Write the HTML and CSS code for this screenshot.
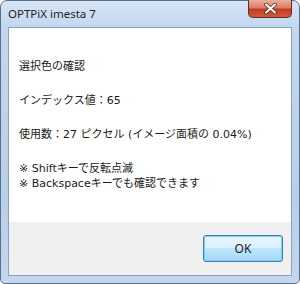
FILE: index.html
```html
<!DOCTYPE html>
<html lang="ja">
<head>
    <meta charset="UTF-8">
    <title>OPTPiX imesta 7</title>
    <link rel="stylesheet" href="styles.css">
</head>
<body>
    <div class="window">
        <div class="titlebar">
            <span class="title">OPTPiX imesta 7</span>
            <div class="close-btn">
                <svg width="13" height="11" viewBox="0 0 13 11">
                    <path d="M2 1.5 L11 9.5 M11 1.5 L2 9.5" stroke="#4a2a24" stroke-width="3.6" stroke-linecap="round"/>
                    <path d="M2 1.5 L11 9.5 M11 1.5 L2 9.5" stroke="#ffffff" stroke-width="2" stroke-linecap="round"/>
                </svg>
            </div>
        </div>
        <div class="client">
            <div class="message">
                <p>選択色の確認</p>
                <p>インデックス値：65</p>
                <p>使用数：27 ピクセル (イメージ面積の 0.04%)</p>
                <p class="notes">※ Shiftキーで反転点滅<br>※ Backspaceキーでも確認できます</p>
            </div>
            <div class="footer">
                <button class="ok">OK</button>
            </div>
        </div>
    </div>
</body>
</html>
```
FILE: styles.css
```css
body {
    margin: 0;
    background: #ffffff;
    font-family: "Noto Sans CJK JP", sans-serif;
}

.window {
    width: 300px;
    height: 284px;
    box-sizing: border-box;
    border: 1px solid #5d6f87;
    border-radius: 7px 7px 5px 5px;
    background: linear-gradient(to bottom, #d6e5f5 0px, #c2d7ef 27px, #b8cfeb 200px, #c4d7ee 284px);
    padding: 0 7px 7px 7px;
    display: flex;
    flex-direction: column;
}

.titlebar {
    height: 26px;
    display: flex;
    align-items: flex-start;
    justify-content: space-between;
}

.title {
    font-family: "Noto Sans", sans-serif;
    font-size: 11.5px;
    color: #1e1e1e;
    margin-top: 5px;
}

.close-btn {
    width: 44px;
    height: 18px;
    margin-top: -1px;
    margin-right: 0;
    border: 1px solid #6a2a22;
    border-top: none;
    border-radius: 0 0 5px 5px;
    background: linear-gradient(to bottom, #eab0a0 0%, #dc7c66 45%, #c43a20 55%, #d25a3c 100%);
    display: flex;
    align-items: center;
    justify-content: center;
    box-sizing: border-box;
}

.client {
    flex: 1;
    border: 1px solid #8aa3c2;
    background: #f0f0f0;
    display: flex;
    flex-direction: column;
}

.message {
    background: #ffffff;
    height: 194px;
    padding: 31px 0 0 10px;
    box-sizing: border-box;
    font-family: "DejaVu Sans", "Noto Sans CJK JP", sans-serif;
    font-size: 11px;
    color: #1a1a1a;
}

.message p {
    margin: 0 0 19px 0;
    line-height: 15px;
}

.footer {
    flex: 1;
    display: flex;
    justify-content: flex-end;
    align-items: flex-start;
    padding: 13px 8px 0 0;
}

.ok {
    width: 80px;
    height: 27px;
    border: 1px solid #3c7fb1;
    border-radius: 3px;
    background: linear-gradient(to bottom, #eaf6fd 0%, #d9f0fc 50%, #bee6fd 50%, #a7d9f5 100%);
    box-shadow: inset 0 0 0 1px #7fd0f6;
    font-family: "Noto Sans", sans-serif;
    font-size: 12px;
    color: #1a1a1a;
    padding: 0;
}
```
